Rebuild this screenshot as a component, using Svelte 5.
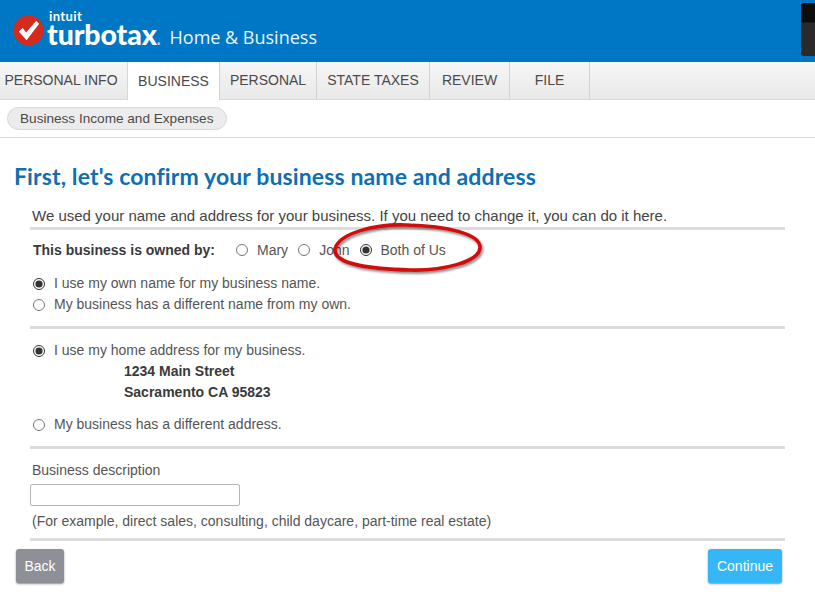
<script lang="ts">
	const tabs = ['PERSONAL INFO', 'BUSINESS', 'PERSONAL', 'STATE TAXES', 'REVIEW', 'FILE'];
	const tabWidths = [128, 93, 97, 113, 80, 80];
	const active = 'BUSINESS';

	let owner = $state('both');
	let nameChoice = $state('own');
	let addressChoice = $state('home');
	let description = $state('');
</script>

<div class="page">
	<header class="header">
		<svg class="mark" viewBox="0 0 32 32" width="31" height="31" aria-hidden="true">
			<circle cx="16" cy="16" r="15.5" fill="#d52b1e" />
			<path d="M6 17 L10 13.5 L13.5 18 L24 6 L27 9 L14 26 Z" fill="#fff" />
		</svg>
		<div class="brand">
			<span class="intuit">intuit</span>
			<span class="turbotax">turbotax<span class="dot">.</span></span>
		</div>
		<span class="product">Home &amp; Business</span>
		<div class="device"></div>
	</header>

	<nav class="tabs">
		{#each tabs as tab, i}
			<div class="tab" class:active={tab === active} style="width: {tabWidths[i]}px">{tab}</div>
		{/each}
	</nav>

	<div class="subnav">
		<span class="pill">Business Income and Expenses</span>
	</div>

	<main class="content">
		<h1 class="title">First, let's confirm your business name and address</h1>

		<div class="form">
			<p class="intro">We used your name and address for your business. If you need to change it, you can do it here.</p>

			<section class="owner-row">
				<strong class="owner-label">This business is owned by:</strong>
				<label class="owner-opt mary"><input type="radio" bind:group={owner} value="mary" />Mary</label>
				<label class="owner-opt john"><input type="radio" bind:group={owner} value="john" />John</label>
				<label class="owner-opt both"><input type="radio" bind:group={owner} value="both" />Both of Us</label>
			</section>

			<section class="names">
				<label class="opt"><input type="radio" bind:group={nameChoice} value="own" />I use my own name for my business name.</label>
				<label class="opt"><input type="radio" bind:group={nameChoice} value="other" />My business has a different name from my own.</label>
			</section>

			<section class="addresses">
				<label class="opt"><input type="radio" bind:group={addressChoice} value="home" />I use my home address for my business.</label>
				<div class="address">
					<div>1234 Main Street</div>
					<div>Sacramento CA 95823</div>
				</div>
				<label class="opt"><input type="radio" bind:group={addressChoice} value="other" />My business has a different address.</label>
			</section>

			<section class="description">
				<label class="desc-label" for="desc">Business description</label>
				<input id="desc" class="desc-input" type="text" bind:value={description} />
				<div class="hint">(For example, direct sales, consulting, child daycare, part-time real estate)</div>
			</section>
		</div>

		<div class="actions">
			<button class="btn back">Back</button>
			<button class="btn continue">Continue</button>
		</div>
	</main>

	<svg class="annotation" viewBox="0 0 160 60" width="160" height="60" aria-hidden="true">
		<defs>
			<filter id="shadow" x="-10%" y="-20%" width="120%" height="150%">
				<feDropShadow dx="1.5" dy="2" stdDeviation="1.2" flood-color="#000" flood-opacity="0.45" />
			</filter>
		</defs>
		<path
			d="M5 28 C9 12 45 3 76 4 C118 5 151 13 150 27 C149 41 112 50 80 49 C44 48 3 44 5 28 Z"
			fill="none"
			stroke="#d01010"
			stroke-width="3.6"
			filter="url(#shadow)"
		/>
	</svg>
</div>

<style>
	:global(body) {
		margin: 0;
		background: #fff;
	}
	.page {
		position: relative;
		width: 815px;
		height: 611px;
		overflow: hidden;
		font-family: "Liberation Sans", Arial, sans-serif;
		color: #444;
	}
	.header {
		position: relative;
		height: 62px;
		background: #0077c5;
		display: flex;
		align-items: flex-start;
		color: #fff;
	}
	.mark {
		margin: 15px 0 0 13px;
		flex: none;
	}
	.brand {
		display: flex;
		flex-direction: column;
		margin: 11px 0 0 3px;
		font-family: Lato, sans-serif;
	}
	.intuit {
		font-size: 13px;
		font-weight: 700;
		line-height: 11px;
		letter-spacing: 0.4px;
		margin-left: 2px;
	}
	.turbotax {
		font-size: 28.5px;
		font-weight: 900;
		line-height: 24px;
		letter-spacing: -0.1px;
	}
	.dot {
		color: #9fd3f0;
		font-size: 16px;
	}
	.product {
		font-family: "Open Sans", sans-serif;
		font-size: 18px;
		line-height: 24px;
		margin: 25px 0 0 9px;
		color: #eaf5fc;
	}
	.device {
		position: absolute;
		top: 3px;
		right: 0;
		width: 14px;
		height: 53px;
		background: linear-gradient(#0c0c0c 0 19px, #2a2a2a 20px);
		border-radius: 3px 0 0 3px;
	}
	.tabs {
		display: flex;
		height: 38px;
		background: linear-gradient(#f6f6f6, #e9e9e9);
		border-bottom: 1px solid #d8d8d8;
		box-sizing: border-box;
	}
	.tab {
		box-sizing: border-box;
		border-right: 1px solid #d2d2d2;
		font-size: 14px;
		line-height: 36px;
		text-align: center;
		color: #4a4a4a;
		white-space: nowrap;
	}
	.tab:first-child {
		padding-right: 5px;
	}
	.tab.active {
		background: #fff;
		height: 38px;
		line-height: 38px;
		border-left: 1px solid #d8d8d8;
		margin-left: -1px;
	}
	.subnav {
		height: 38px;
		box-sizing: border-box;
		border-bottom: 1px solid #d9d9d9;
		padding: 7px 0 0 7px;
	}
	.pill {
		display: inline-block;
		height: 23px;
		box-sizing: border-box;
		padding: 0 13px 0 12px;
		border: 1px solid #d8d8d8;
		border-radius: 12px;
		background: #ececec;
		font-size: 13.6px;
		line-height: 21px;
		color: #4a4a4a;
	}
	.content {
		padding: 24px 30px 0 14px;
	}
	.title {
		margin: 0;
		font-family: Lato, sans-serif;
		font-size: 23px;
		line-height: 28px;
		font-weight: 700;
		letter-spacing: 0.12px;
		color: #0e6fb3;
	}
	.form {
		margin: 17px 0 0 16px;
	}
	.intro {
		margin: 0;
		font-size: 15px;
		line-height: 18px;
		padding: 0 0 2px 2px;
		border-bottom: 3px solid #dcdcdc;
	}
	.owner-row {
		display: flex;
		align-items: center;
		height: 39px;
		padding-left: 3px;
		font-size: 14px;
	}
	.owner-label {
		width: 203px;
		flex: none;
		color: #3a3a3a;
	}
	.owner-opt {
		display: flex;
		align-items: center;
		color: #555;
	}
	.owner-opt input {
		margin: 0 9px 0 0;
	}
	.mary {
		margin-right: 10px;
	}
	.john {
		margin-right: 11px;
	}
	.both input {
		margin-right: 8px;
	}
	input[type='radio'] {
		width: 12px;
		height: 12px;
		flex: none;
		accent-color: #333;
	}
	.names {
		padding: 4px 0 11px 3px;
		border-bottom: 3px solid #dcdcdc;
	}
	.opt {
		display: flex;
		align-items: center;
		font-size: 14px;
		line-height: 21px;
		color: #555;
	}
	.opt input {
		margin: 0 9px 0 0;
	}
	.addresses {
		padding: 11px 0 11px 3px;
		border-bottom: 3px solid #dcdcdc;
	}
	.address {
		margin: 0 0 11px 91px;
		font-size: 14px;
		font-weight: 700;
		line-height: 21px;
		color: #3a3a3a;
	}
	.description {
		padding: 12px 0 0 2px;
		border-bottom: 3px solid #dcdcdc;
	}
	.desc-label {
		display: block;
		font-size: 14px;
		line-height: 18px;
		color: #555;
	}
	.desc-input {
		display: block;
		box-sizing: border-box;
		width: 210px;
		height: 22px;
		margin: 5px 0 0 -2px;
		border: 1px solid #b4b4b4;
		border-radius: 2px;
		background: #fff;
	}
	.hint {
		font-size: 14px;
		line-height: 18px;
		margin-top: 6px;
		padding-bottom: 8px;
		color: #555;
	}
	.actions {
		display: flex;
		justify-content: space-between;
		margin-top: 8px;
		padding: 0 3px 0 2px;
	}
	.btn {
		height: 34px;
		border: none;
		border-radius: 3px;
		color: #fff;
		font-family: inherit;
		font-size: 14px;
		box-shadow: 0 1px 2px rgba(0, 0, 0, 0.45);
		padding: 0;
	}
	.back {
		width: 48px;
		background: #8d9096;
	}
	.continue {
		width: 74px;
		background: #35b7f5;
	}
	.annotation {
		position: absolute;
		left: 330px;
		top: 221px;
		pointer-events: none;
	}
</style>
